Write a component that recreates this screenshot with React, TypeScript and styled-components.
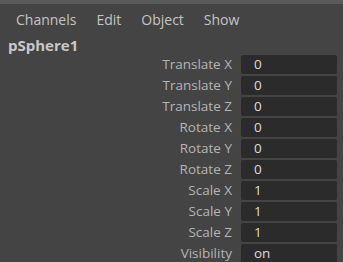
import * as React from 'react'
import styled, {createGlobalStyle} from 'styled-components'

const GlobalStyle = createGlobalStyle`
  html, body {
    margin: 0;
    padding: 0;
    background: #444444;
    overflow: hidden;
  }
  body {
    font-family: "Open Sans", "DejaVu Sans", sans-serif;
  }
`

const Panel = styled.div`
  width: 343px;
  height: 262px;
  background: #444444;
  border-top: 4px solid #5a5a5a;
  box-sizing: border-box;
  overflow: hidden;
`

const MenuBar = styled.div`
  display: flex;
  align-items: center;
  gap: 20px;
  height: 31px;
  padding-left: 16px;
  font-size: 14px;
  color: #c4c4c4;
`

const MenuItem = styled.span`
  cursor: default;
`

const NodeName = styled.div`
  height: 20px;
  padding-left: 8px;
  font-size: 15px;
  font-weight: 700;
  color: #c8c8c8;
  line-height: 20px;
`

const Channels = styled.div`
  display: grid;
  grid-template-columns: 1fr 96px;
  column-gap: 9px;
  row-gap: 2px;
  grid-auto-rows: 19px;
  padding-right: 6px;
`

const Label = styled.div`
  text-align: right;
  font-size: 13.5px;
  line-height: 19px;
  color: #b4b4b4;
  white-space: nowrap;
`

const Field = styled.div`
  background: #2b2b2b;
  border-radius: 2px;
  padding-left: 13px;
  font-size: 13.5px;
  line-height: 19px;
  color: #dcdcdc;
`

const channels: [string, string][] = [
  ['Translate X', '0'],
  ['Translate Y', '0'],
  ['Translate Z', '0'],
  ['Rotate X', '0'],
  ['Rotate Y', '0'],
  ['Rotate Z', '0'],
  ['Scale X', '1'],
  ['Scale Y', '1'],
  ['Scale Z', '1'],
  ['Visibility', 'on']
]

export default function App() {
  return (
    <React.Fragment>
      <GlobalStyle />
      <Panel>
        <MenuBar>
          <MenuItem>Channels</MenuItem>
          <MenuItem>Edit</MenuItem>
          <MenuItem>Object</MenuItem>
          <MenuItem>Show</MenuItem>
        </MenuBar>
        <NodeName>pSphere1</NodeName>
        <Channels>
          {channels.map(([name, value]) => (
            <React.Fragment key={name}>
              <Label>{name}</Label>
              <Field>{value}</Field>
            </React.Fragment>
          ))}
        </Channels>
      </Panel>
    </React.Fragment>
  )
}
